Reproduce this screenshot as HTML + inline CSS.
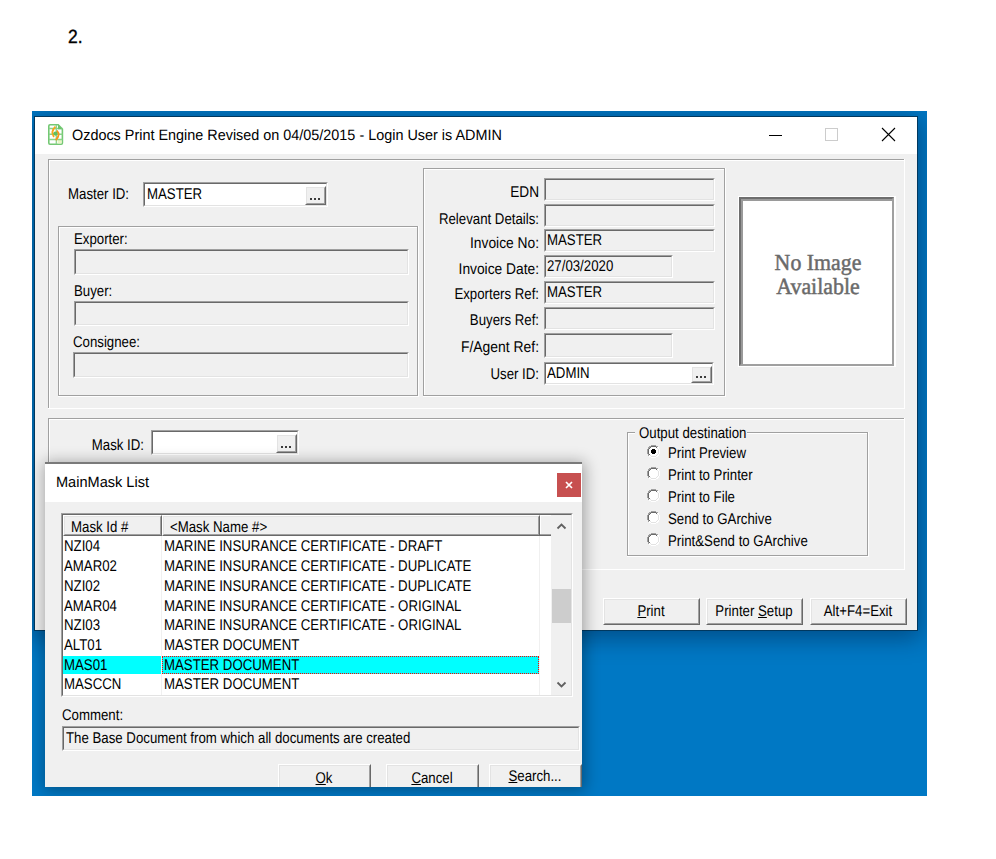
<!DOCTYPE html>
<html><head><meta charset="utf-8"><style>
html,body{margin:0;padding:0;background:#fff;width:996px;height:859px;overflow:hidden;position:relative}
div{position:absolute}
.t{white-space:pre;text-rendering:geometricPrecision}
</style></head><body>
<div class="t" style="left:68px;top:28px;font-size:19px;line-height:19px;color:#000;font-family:'Liberation Sans';transform:scaleX(0.92);transform-origin:left top;-webkit-text-stroke:0.35px #000;">2.</div>
<div style="left:32px;top:111px;width:895px;height:685px;background:#0078c4;overflow:hidden"><div style="left:3px;top:6px;width:882px;height:513px;box-shadow:0 5px 22px 3px rgba(0,20,50,0.42)"></div><div style="left:2px;top:5px;width:884px;height:515px;background:#00385f"></div></div>
<div style="left:35px;top:117px;width:882px;height:513px;background:#f0f0f0"></div>
<div style="left:35px;top:117px;width:882px;height:37px;background:#fff"></div>
<svg style="position:absolute;left:48px;top:124px" width="16" height="21" viewBox="0 0 16 21">
<path d="M2 0.8 H10.2 L14.4 5 V19 Q14.4 20.2 13.2 20.2 H2 Q0.8 20.2 0.8 19 V2 Q0.8 0.8 2 0.8 Z" fill="#fff" stroke="#74c874" stroke-width="1.6"/>
<rect x="9.6" y="15.6" width="4" height="3.8" fill="#e9f6c4"/>
<path d="M1 4.6 H14.4 M1 10.3 H14.4 M1 15.6 H14.4" stroke="#8ad48a" stroke-width="1.5"/>
<path d="M8.3 1 V20" stroke="#8ad48a" stroke-width="1.3"/>
<path d="M10 0.8 V5.2 H14.4 Z" fill="#6cc46c"/>
<path d="M7.4 2.6 Q2.4 7.4 5.9 12.9" fill="none" stroke="#f8a51c" stroke-width="1.8"/>
<path d="M8.9 6.6 Q12.8 11 7.7 16.2" fill="none" stroke="#f7941a" stroke-width="1.8"/>
<circle cx="7.4" cy="9.6" r="2.1" fill="#5fc05f"/>
</svg>
<div class="t" style="left:72px;top:128px;font-size:15px;line-height:15px;color:#000;font-family:'Liberation Sans';transform:scaleX(0.96);transform-origin:left top;">Ozdocs Print Engine Revised on 04/05/2015 - Login User is ADMIN</div>
<div style="left:769px;top:135px;width:13px;height:1px;background:#000"></div>
<div style="left:825px;top:128px;width:13px;height:13px;border:1px solid #cccccc;box-sizing:border-box"></div>
<svg style="position:absolute;left:881px;top:127px" width="15" height="15" viewBox="0 0 15 15"><path d="M1 1 L14 14 M14 1 L1 14" stroke="#000" stroke-width="1.1"/></svg>
<div style="left:48px;top:159px;width:856px;height:1px;background:#a0a0a0"></div>
<div style="left:48px;top:159px;width:1px;height:249px;background:#a0a0a0"></div>
<div style="left:49px;top:160px;width:855px;height:1px;background:#fff"></div>
<div style="left:49px;top:160px;width:1px;height:248px;background:#fff"></div>
<div style="left:48px;top:408px;width:857px;height:1px;background:#fff"></div>
<div style="left:904px;top:159px;width:1px;height:250px;background:#fff"></div>
<div class="t" style="left:68px;top:187px;font-size:15.5px;line-height:15.5px;color:#000;font-family:'Liberation Sans';transform:scaleX(0.854);transform-origin:left top;">Master ID:</div>
<div style="left:143px;top:182px;width:185px;height:25px;background:#fff;border-top:1px solid #a0a0a0;border-left:1px solid #a0a0a0;border-bottom:1px solid #fff;border-right:1px solid #fff;box-sizing:border-box"></div>
<div style="left:144px;top:183px;width:183px;height:23px;border-top:1px solid #696969;border-left:1px solid #696969;border-bottom:1px solid #e3e3e3;border-right:1px solid #e3e3e3;box-sizing:border-box"></div>
<div class="t" style="left:147px;top:187px;font-size:15.5px;line-height:15.5px;color:#000;font-family:'Liberation Sans';transform:scaleX(0.854);transform-origin:left top;">MASTER</div>
<div style="left:305px;top:186px;width:21px;height:19px;background:#f0f0f0;border-top:1px solid #fff;border-left:1px solid #fff;border-bottom:1px solid #696969;border-right:1px solid #696969;box-sizing:border-box"></div>
<div style="left:306px;top:187px;width:19px;height:17px;border-top:1px solid #e3e3e3;border-left:1px solid #e3e3e3;border-bottom:1px solid #a0a0a0;border-right:1px solid #a0a0a0;box-sizing:border-box"></div>
<div style="left:310px;top:198px;width:2px;height:2px;background:#000;border-radius:1px"></div>
<div style="left:314px;top:198px;width:2px;height:2px;background:#000;border-radius:1px"></div>
<div style="left:318px;top:198px;width:2px;height:2px;background:#000;border-radius:1px"></div>
<div style="left:58px;top:226px;width:360px;height:170px;border:1px solid #a0a0a0;box-sizing:border-box"></div>
<div style="left:59px;top:227px;width:358px;height:168px;border-top:1px solid #fff;border-left:1px solid #fff;box-sizing:border-box"></div>
<div style="left:58px;top:396px;width:361px;height:1px;background:#fff"></div>
<div style="left:418px;top:226px;width:1px;height:171px;background:#fff"></div>
<div class="t" style="left:74px;top:232px;font-size:15.5px;line-height:15.5px;color:#000;font-family:'Liberation Sans';transform:scaleX(0.854);transform-origin:left top;">Exporter:</div>
<div style="left:74px;top:249px;width:335px;height:26px;background:#f0f0f0;border-top:1px solid #a0a0a0;border-left:1px solid #a0a0a0;border-bottom:1px solid #fff;border-right:1px solid #fff;box-sizing:border-box"></div>
<div style="left:75px;top:250px;width:333px;height:24px;border-top:1px solid #696969;border-left:1px solid #696969;border-bottom:1px solid #e3e3e3;border-right:1px solid #e3e3e3;box-sizing:border-box"></div>
<div class="t" style="left:74px;top:284px;font-size:15.5px;line-height:15.5px;color:#000;font-family:'Liberation Sans';transform:scaleX(0.854);transform-origin:left top;">Buyer:</div>
<div style="left:74px;top:301px;width:335px;height:25px;background:#f0f0f0;border-top:1px solid #a0a0a0;border-left:1px solid #a0a0a0;border-bottom:1px solid #fff;border-right:1px solid #fff;box-sizing:border-box"></div>
<div style="left:75px;top:302px;width:333px;height:23px;border-top:1px solid #696969;border-left:1px solid #696969;border-bottom:1px solid #e3e3e3;border-right:1px solid #e3e3e3;box-sizing:border-box"></div>
<div class="t" style="left:73px;top:335px;font-size:15.5px;line-height:15.5px;color:#000;font-family:'Liberation Sans';transform:scaleX(0.854);transform-origin:left top;">Consignee:</div>
<div style="left:73px;top:352px;width:336px;height:26px;background:#f0f0f0;border-top:1px solid #a0a0a0;border-left:1px solid #a0a0a0;border-bottom:1px solid #fff;border-right:1px solid #fff;box-sizing:border-box"></div>
<div style="left:74px;top:353px;width:334px;height:24px;border-top:1px solid #696969;border-left:1px solid #696969;border-bottom:1px solid #e3e3e3;border-right:1px solid #e3e3e3;box-sizing:border-box"></div>
<div style="left:423px;top:168px;width:302px;height:228px;border:1px solid #a0a0a0;box-sizing:border-box"></div>
<div style="left:424px;top:169px;width:300px;height:226px;border-top:1px solid #fff;border-left:1px solid #fff;box-sizing:border-box"></div>
<div style="left:423px;top:396px;width:303px;height:1px;background:#fff"></div>
<div style="left:725px;top:168px;width:1px;height:229px;background:#fff"></div>
<div class="t" style="left:-61px;width:600px;text-align:right;top:185px;font-size:15.5px;line-height:15.5px;color:#000;font-family:'Liberation Sans';transform:scaleX(0.87962);transform-origin:right top;">EDN</div>
<div style="left:544px;top:178px;width:171px;height:23px;background:#f0f0f0;border-top:1px solid #a0a0a0;border-left:1px solid #a0a0a0;border-bottom:1px solid #fff;border-right:1px solid #fff;box-sizing:border-box"></div>
<div style="left:545px;top:179px;width:169px;height:21px;border-top:1px solid #696969;border-left:1px solid #696969;border-bottom:1px solid #e3e3e3;border-right:1px solid #e3e3e3;box-sizing:border-box"></div>
<div class="t" style="left:-61px;width:600px;text-align:right;top:212px;font-size:15.5px;line-height:15.5px;color:#000;font-family:'Liberation Sans';transform:scaleX(0.854);transform-origin:right top;">Relevant Details:</div>
<div style="left:544px;top:204px;width:171px;height:23px;background:#f0f0f0;border-top:1px solid #a0a0a0;border-left:1px solid #a0a0a0;border-bottom:1px solid #fff;border-right:1px solid #fff;box-sizing:border-box"></div>
<div style="left:545px;top:205px;width:169px;height:21px;border-top:1px solid #696969;border-left:1px solid #696969;border-bottom:1px solid #e3e3e3;border-right:1px solid #e3e3e3;box-sizing:border-box"></div>
<div class="t" style="left:-61px;width:600px;text-align:right;top:236px;font-size:15.5px;line-height:15.5px;color:#000;font-family:'Liberation Sans';transform:scaleX(0.889868);transform-origin:right top;">Invoice No:</div>
<div style="left:544px;top:229px;width:171px;height:23px;background:#f0f0f0;border-top:1px solid #a0a0a0;border-left:1px solid #a0a0a0;border-bottom:1px solid #fff;border-right:1px solid #fff;box-sizing:border-box"></div>
<div style="left:545px;top:230px;width:169px;height:21px;border-top:1px solid #696969;border-left:1px solid #696969;border-bottom:1px solid #e3e3e3;border-right:1px solid #e3e3e3;box-sizing:border-box"></div>
<div class="t" style="left:547px;top:233px;font-size:15.5px;line-height:15.5px;color:#000;font-family:'Liberation Sans';transform:scaleX(0.854);transform-origin:left top;">MASTER</div>
<div class="t" style="left:-61px;width:600px;text-align:right;top:262px;font-size:15.5px;line-height:15.5px;color:#000;font-family:'Liberation Sans';transform:scaleX(0.889014);transform-origin:right top;">Invoice Date:</div>
<div style="left:544px;top:255px;width:129px;height:23px;background:#f0f0f0;border-top:1px solid #a0a0a0;border-left:1px solid #a0a0a0;border-bottom:1px solid #fff;border-right:1px solid #fff;box-sizing:border-box"></div>
<div style="left:545px;top:256px;width:127px;height:21px;border-top:1px solid #696969;border-left:1px solid #696969;border-bottom:1px solid #e3e3e3;border-right:1px solid #e3e3e3;box-sizing:border-box"></div>
<div class="t" style="left:547px;top:259px;font-size:15.5px;line-height:15.5px;color:#000;font-family:'Liberation Sans';transform:scaleX(0.854);transform-origin:left top;">27/03/2020</div>
<div class="t" style="left:-61px;width:600px;text-align:right;top:287px;font-size:15.5px;line-height:15.5px;color:#000;font-family:'Liberation Sans';transform:scaleX(0.854);transform-origin:right top;">Exporters Ref:</div>
<div style="left:544px;top:281px;width:171px;height:23px;background:#f0f0f0;border-top:1px solid #a0a0a0;border-left:1px solid #a0a0a0;border-bottom:1px solid #fff;border-right:1px solid #fff;box-sizing:border-box"></div>
<div style="left:545px;top:282px;width:169px;height:21px;border-top:1px solid #696969;border-left:1px solid #696969;border-bottom:1px solid #e3e3e3;border-right:1px solid #e3e3e3;box-sizing:border-box"></div>
<div class="t" style="left:547px;top:285px;font-size:15.5px;line-height:15.5px;color:#000;font-family:'Liberation Sans';transform:scaleX(0.854);transform-origin:left top;">MASTER</div>
<div class="t" style="left:-61px;width:600px;text-align:right;top:313px;font-size:15.5px;line-height:15.5px;color:#000;font-family:'Liberation Sans';transform:scaleX(0.854);transform-origin:right top;">Buyers Ref:</div>
<div style="left:544px;top:307px;width:171px;height:23px;background:#f0f0f0;border-top:1px solid #a0a0a0;border-left:1px solid #a0a0a0;border-bottom:1px solid #fff;border-right:1px solid #fff;box-sizing:border-box"></div>
<div style="left:545px;top:308px;width:169px;height:21px;border-top:1px solid #696969;border-left:1px solid #696969;border-bottom:1px solid #e3e3e3;border-right:1px solid #e3e3e3;box-sizing:border-box"></div>
<div class="t" style="left:-61px;width:600px;text-align:right;top:340px;font-size:15.5px;line-height:15.5px;color:#000;font-family:'Liberation Sans';transform:scaleX(0.8967);transform-origin:right top;">F/Agent Ref:</div>
<div style="left:544px;top:333px;width:129px;height:25px;background:#f0f0f0;border-top:1px solid #a0a0a0;border-left:1px solid #a0a0a0;border-bottom:1px solid #fff;border-right:1px solid #fff;box-sizing:border-box"></div>
<div style="left:545px;top:334px;width:127px;height:23px;border-top:1px solid #696969;border-left:1px solid #696969;border-bottom:1px solid #e3e3e3;border-right:1px solid #e3e3e3;box-sizing:border-box"></div>
<div class="t" style="left:-61px;width:600px;text-align:right;top:367px;font-size:15.5px;line-height:15.5px;color:#000;font-family:'Liberation Sans';transform:scaleX(0.854);transform-origin:right top;">User ID:</div>
<div style="left:544px;top:362px;width:170px;height:23px;background:#fff;border-top:1px solid #a0a0a0;border-left:1px solid #a0a0a0;border-bottom:1px solid #fff;border-right:1px solid #fff;box-sizing:border-box"></div>
<div style="left:545px;top:363px;width:168px;height:21px;border-top:1px solid #696969;border-left:1px solid #696969;border-bottom:1px solid #e3e3e3;border-right:1px solid #e3e3e3;box-sizing:border-box"></div>
<div class="t" style="left:547px;top:366px;font-size:15.5px;line-height:15.5px;color:#000;font-family:'Liberation Sans';transform:scaleX(0.854);transform-origin:left top;">ADMIN</div>
<div style="left:691px;top:366px;width:21px;height:17px;background:#f0f0f0;border-top:1px solid #fff;border-left:1px solid #fff;border-bottom:1px solid #696969;border-right:1px solid #696969;box-sizing:border-box"></div>
<div style="left:692px;top:367px;width:19px;height:15px;border-top:1px solid #e3e3e3;border-left:1px solid #e3e3e3;border-bottom:1px solid #a0a0a0;border-right:1px solid #a0a0a0;box-sizing:border-box"></div>
<div style="left:696px;top:376px;width:2px;height:2px;background:#000;border-radius:1px"></div>
<div style="left:700px;top:376px;width:2px;height:2px;background:#000;border-radius:1px"></div>
<div style="left:704px;top:376px;width:2px;height:2px;background:#000;border-radius:1px"></div>
<div style="left:738px;top:196px;width:158px;height:171px;background:#fff"></div>
<div style="left:739px;top:197px;width:155px;height:169px;background:#fff;border-top:2px solid #6e6e6e;border-left:2px solid #6e6e6e;border-bottom:2px solid #a0a0a0;border-right:2px solid #a0a0a0;box-sizing:border-box"></div>
<div style="left:741px;top:199px;width:151px;height:165px;border-top:2px solid #9a9a9a;border-left:2px solid #9a9a9a;box-sizing:border-box"></div>
<div class="t" style="left:518px;width:600px;text-align:center;top:251px;font-size:23px;line-height:23px;color:#6a6a6a;font-family:'Liberation Serif';transform:scaleX(0.95);transform-origin:center top;font-weight:normal;-webkit-text-stroke:0.5px #6a6a6a;">No Image</div>
<div class="t" style="left:518px;width:600px;text-align:center;top:275px;font-size:23px;line-height:23px;color:#6a6a6a;font-family:'Liberation Serif';transform:scaleX(0.95);transform-origin:center top;font-weight:normal;-webkit-text-stroke:0.5px #6a6a6a;">Available</div>
<div style="left:48px;top:418px;width:856px;height:1px;background:#a0a0a0"></div>
<div style="left:48px;top:418px;width:1px;height:151px;background:#a0a0a0"></div>
<div style="left:49px;top:419px;width:855px;height:1px;background:#fff"></div>
<div style="left:49px;top:419px;width:1px;height:150px;background:#fff"></div>
<div style="left:48px;top:569px;width:857px;height:1px;background:#fff"></div>
<div style="left:904px;top:418px;width:1px;height:152px;background:#fff"></div>
<div class="t" style="left:-456px;width:600px;text-align:right;top:438px;font-size:15.5px;line-height:15.5px;color:#000;font-family:'Liberation Sans';transform:scaleX(0.854);transform-origin:right top;">Mask ID:</div>
<div style="left:151px;top:430px;width:148px;height:25px;background:#fff;border-top:1px solid #a0a0a0;border-left:1px solid #a0a0a0;border-bottom:1px solid #fff;border-right:1px solid #fff;box-sizing:border-box"></div>
<div style="left:152px;top:431px;width:146px;height:23px;border-top:1px solid #696969;border-left:1px solid #696969;border-bottom:1px solid #e3e3e3;border-right:1px solid #e3e3e3;box-sizing:border-box"></div>
<div style="left:276px;top:434px;width:21px;height:19px;background:#f0f0f0;border-top:1px solid #fff;border-left:1px solid #fff;border-bottom:1px solid #696969;border-right:1px solid #696969;box-sizing:border-box"></div>
<div style="left:277px;top:435px;width:19px;height:17px;border-top:1px solid #e3e3e3;border-left:1px solid #e3e3e3;border-bottom:1px solid #a0a0a0;border-right:1px solid #a0a0a0;box-sizing:border-box"></div>
<div style="left:281px;top:446px;width:2px;height:2px;background:#000;border-radius:1px"></div>
<div style="left:285px;top:446px;width:2px;height:2px;background:#000;border-radius:1px"></div>
<div style="left:289px;top:446px;width:2px;height:2px;background:#000;border-radius:1px"></div>
<div style="left:627px;top:432px;width:241px;height:124px;border:1px solid #a0a0a0;box-sizing:border-box"></div>
<div style="left:628px;top:433px;width:239px;height:122px;border-top:1px solid #fff;border-left:1px solid #fff;box-sizing:border-box"></div>
<div style="left:627px;top:556px;width:242px;height:1px;background:#fff"></div>
<div style="left:868px;top:432px;width:1px;height:125px;background:#fff"></div>
<div style="left:635px;top:426px;width:112px;height:12px;background:#f0f0f0"></div>
<div class="t" style="left:639px;top:426px;font-size:15.5px;line-height:15.5px;color:#000;font-family:'Liberation Sans';transform:scaleX(0.854);transform-origin:left top;">Output destination</div>
<svg style="position:absolute;left:647px;top:445px" width="13" height="13" shape-rendering="crispEdges"><rect x="4" y="0" width="1" height="1" fill="#a0a0a0"/><rect x="5" y="0" width="1" height="1" fill="#a0a0a0"/><rect x="6" y="0" width="1" height="1" fill="#a0a0a0"/><rect x="7" y="0" width="1" height="1" fill="#a0a0a0"/><rect x="8" y="0" width="1" height="1" fill="#a0a0a0"/><rect x="2" y="1" width="1" height="1" fill="#a0a0a0"/><rect x="3" y="1" width="1" height="1" fill="#a0a0a0"/><rect x="4" y="1" width="1" height="1" fill="#696969"/><rect x="5" y="1" width="1" height="1" fill="#696969"/><rect x="6" y="1" width="1" height="1" fill="#696969"/><rect x="7" y="1" width="1" height="1" fill="#696969"/><rect x="8" y="1" width="1" height="1" fill="#696969"/><rect x="9" y="1" width="1" height="1" fill="#a0a0a0"/><rect x="10" y="1" width="1" height="1" fill="#a0a0a0"/><rect x="1" y="2" width="1" height="1" fill="#a0a0a0"/><rect x="2" y="2" width="1" height="1" fill="#a0a0a0"/><rect x="3" y="2" width="1" height="1" fill="#696969"/><rect x="4" y="2" width="1" height="1" fill="#ffffff"/><rect x="5" y="2" width="1" height="1" fill="#ffffff"/><rect x="6" y="2" width="1" height="1" fill="#ffffff"/><rect x="7" y="2" width="1" height="1" fill="#ffffff"/><rect x="8" y="2" width="1" height="1" fill="#ffffff"/><rect x="9" y="2" width="1" height="1" fill="#696969"/><rect x="10" y="2" width="1" height="1" fill="#ffffff"/><rect x="11" y="2" width="1" height="1" fill="#ffffff"/><rect x="1" y="3" width="1" height="1" fill="#a0a0a0"/><rect x="2" y="3" width="1" height="1" fill="#696969"/><rect x="3" y="3" width="1" height="1" fill="#ffffff"/><rect x="4" y="3" width="1" height="1" fill="#ffffff"/><rect x="5" y="3" width="1" height="1" fill="#ffffff"/><rect x="6" y="3" width="1" height="1" fill="#ffffff"/><rect x="7" y="3" width="1" height="1" fill="#ffffff"/><rect x="8" y="3" width="1" height="1" fill="#ffffff"/><rect x="9" y="3" width="1" height="1" fill="#ffffff"/><rect x="10" y="3" width="1" height="1" fill="#e3e3e3"/><rect x="11" y="3" width="1" height="1" fill="#ffffff"/><rect x="0" y="4" width="1" height="1" fill="#a0a0a0"/><rect x="1" y="4" width="1" height="1" fill="#696969"/><rect x="2" y="4" width="1" height="1" fill="#ffffff"/><rect x="3" y="4" width="1" height="1" fill="#ffffff"/><rect x="4" y="4" width="1" height="1" fill="#ffffff"/><rect x="5" y="4" width="1" height="1" fill="#000000"/><rect x="6" y="4" width="1" height="1" fill="#000000"/><rect x="7" y="4" width="1" height="1" fill="#000000"/><rect x="8" y="4" width="1" height="1" fill="#ffffff"/><rect x="9" y="4" width="1" height="1" fill="#ffffff"/><rect x="10" y="4" width="1" height="1" fill="#ffffff"/><rect x="11" y="4" width="1" height="1" fill="#e3e3e3"/><rect x="12" y="4" width="1" height="1" fill="#ffffff"/><rect x="0" y="5" width="1" height="1" fill="#a0a0a0"/><rect x="1" y="5" width="1" height="1" fill="#696969"/><rect x="2" y="5" width="1" height="1" fill="#ffffff"/><rect x="3" y="5" width="1" height="1" fill="#ffffff"/><rect x="4" y="5" width="1" height="1" fill="#000000"/><rect x="5" y="5" width="1" height="1" fill="#000000"/><rect x="6" y="5" width="1" height="1" fill="#000000"/><rect x="7" y="5" width="1" height="1" fill="#000000"/><rect x="8" y="5" width="1" height="1" fill="#000000"/><rect x="9" y="5" width="1" height="1" fill="#ffffff"/><rect x="10" y="5" width="1" height="1" fill="#ffffff"/><rect x="11" y="5" width="1" height="1" fill="#e3e3e3"/><rect x="12" y="5" width="1" height="1" fill="#ffffff"/><rect x="0" y="6" width="1" height="1" fill="#a0a0a0"/><rect x="1" y="6" width="1" height="1" fill="#696969"/><rect x="2" y="6" width="1" height="1" fill="#ffffff"/><rect x="3" y="6" width="1" height="1" fill="#ffffff"/><rect x="4" y="6" width="1" height="1" fill="#000000"/><rect x="5" y="6" width="1" height="1" fill="#000000"/><rect x="6" y="6" width="1" height="1" fill="#000000"/><rect x="7" y="6" width="1" height="1" fill="#000000"/><rect x="8" y="6" width="1" height="1" fill="#000000"/><rect x="9" y="6" width="1" height="1" fill="#ffffff"/><rect x="10" y="6" width="1" height="1" fill="#ffffff"/><rect x="11" y="6" width="1" height="1" fill="#e3e3e3"/><rect x="12" y="6" width="1" height="1" fill="#ffffff"/><rect x="0" y="7" width="1" height="1" fill="#a0a0a0"/><rect x="1" y="7" width="1" height="1" fill="#696969"/><rect x="2" y="7" width="1" height="1" fill="#ffffff"/><rect x="3" y="7" width="1" height="1" fill="#ffffff"/><rect x="4" y="7" width="1" height="1" fill="#000000"/><rect x="5" y="7" width="1" height="1" fill="#000000"/><rect x="6" y="7" width="1" height="1" fill="#000000"/><rect x="7" y="7" width="1" height="1" fill="#000000"/><rect x="8" y="7" width="1" height="1" fill="#000000"/><rect x="9" y="7" width="1" height="1" fill="#ffffff"/><rect x="10" y="7" width="1" height="1" fill="#ffffff"/><rect x="11" y="7" width="1" height="1" fill="#e3e3e3"/><rect x="12" y="7" width="1" height="1" fill="#ffffff"/><rect x="0" y="8" width="1" height="1" fill="#a0a0a0"/><rect x="1" y="8" width="1" height="1" fill="#696969"/><rect x="2" y="8" width="1" height="1" fill="#ffffff"/><rect x="3" y="8" width="1" height="1" fill="#ffffff"/><rect x="4" y="8" width="1" height="1" fill="#ffffff"/><rect x="5" y="8" width="1" height="1" fill="#000000"/><rect x="6" y="8" width="1" height="1" fill="#000000"/><rect x="7" y="8" width="1" height="1" fill="#000000"/><rect x="8" y="8" width="1" height="1" fill="#ffffff"/><rect x="9" y="8" width="1" height="1" fill="#ffffff"/><rect x="10" y="8" width="1" height="1" fill="#ffffff"/><rect x="11" y="8" width="1" height="1" fill="#e3e3e3"/><rect x="12" y="8" width="1" height="1" fill="#ffffff"/><rect x="1" y="9" width="1" height="1" fill="#a0a0a0"/><rect x="2" y="9" width="1" height="1" fill="#696969"/><rect x="3" y="9" width="1" height="1" fill="#ffffff"/><rect x="4" y="9" width="1" height="1" fill="#ffffff"/><rect x="5" y="9" width="1" height="1" fill="#ffffff"/><rect x="6" y="9" width="1" height="1" fill="#ffffff"/><rect x="7" y="9" width="1" height="1" fill="#ffffff"/><rect x="8" y="9" width="1" height="1" fill="#ffffff"/><rect x="9" y="9" width="1" height="1" fill="#ffffff"/><rect x="10" y="9" width="1" height="1" fill="#e3e3e3"/><rect x="11" y="9" width="1" height="1" fill="#ffffff"/><rect x="1" y="10" width="1" height="1" fill="#a0a0a0"/><rect x="2" y="10" width="1" height="1" fill="#ffffff"/><rect x="3" y="10" width="1" height="1" fill="#e3e3e3"/><rect x="4" y="10" width="1" height="1" fill="#ffffff"/><rect x="5" y="10" width="1" height="1" fill="#ffffff"/><rect x="6" y="10" width="1" height="1" fill="#ffffff"/><rect x="7" y="10" width="1" height="1" fill="#ffffff"/><rect x="8" y="10" width="1" height="1" fill="#ffffff"/><rect x="9" y="10" width="1" height="1" fill="#e3e3e3"/><rect x="10" y="10" width="1" height="1" fill="#ffffff"/><rect x="11" y="10" width="1" height="1" fill="#ffffff"/><rect x="2" y="11" width="1" height="1" fill="#ffffff"/><rect x="3" y="11" width="1" height="1" fill="#ffffff"/><rect x="4" y="11" width="1" height="1" fill="#e3e3e3"/><rect x="5" y="11" width="1" height="1" fill="#e3e3e3"/><rect x="6" y="11" width="1" height="1" fill="#e3e3e3"/><rect x="7" y="11" width="1" height="1" fill="#e3e3e3"/><rect x="8" y="11" width="1" height="1" fill="#e3e3e3"/><rect x="9" y="11" width="1" height="1" fill="#ffffff"/><rect x="10" y="11" width="1" height="1" fill="#ffffff"/><rect x="4" y="12" width="1" height="1" fill="#ffffff"/><rect x="5" y="12" width="1" height="1" fill="#ffffff"/><rect x="6" y="12" width="1" height="1" fill="#ffffff"/><rect x="7" y="12" width="1" height="1" fill="#ffffff"/><rect x="8" y="12" width="1" height="1" fill="#ffffff"/></svg>
<div class="t" style="left:668px;top:446px;font-size:15.5px;line-height:15.5px;color:#000;font-family:'Liberation Sans';transform:scaleX(0.854);transform-origin:left top;">Print Preview</div>
<svg style="position:absolute;left:647px;top:467px" width="13" height="13" shape-rendering="crispEdges"><rect x="4" y="0" width="1" height="1" fill="#a0a0a0"/><rect x="5" y="0" width="1" height="1" fill="#a0a0a0"/><rect x="6" y="0" width="1" height="1" fill="#a0a0a0"/><rect x="7" y="0" width="1" height="1" fill="#a0a0a0"/><rect x="8" y="0" width="1" height="1" fill="#a0a0a0"/><rect x="2" y="1" width="1" height="1" fill="#a0a0a0"/><rect x="3" y="1" width="1" height="1" fill="#a0a0a0"/><rect x="4" y="1" width="1" height="1" fill="#696969"/><rect x="5" y="1" width="1" height="1" fill="#696969"/><rect x="6" y="1" width="1" height="1" fill="#696969"/><rect x="7" y="1" width="1" height="1" fill="#696969"/><rect x="8" y="1" width="1" height="1" fill="#696969"/><rect x="9" y="1" width="1" height="1" fill="#a0a0a0"/><rect x="10" y="1" width="1" height="1" fill="#a0a0a0"/><rect x="1" y="2" width="1" height="1" fill="#a0a0a0"/><rect x="2" y="2" width="1" height="1" fill="#a0a0a0"/><rect x="3" y="2" width="1" height="1" fill="#696969"/><rect x="4" y="2" width="1" height="1" fill="#ffffff"/><rect x="5" y="2" width="1" height="1" fill="#ffffff"/><rect x="6" y="2" width="1" height="1" fill="#ffffff"/><rect x="7" y="2" width="1" height="1" fill="#ffffff"/><rect x="8" y="2" width="1" height="1" fill="#ffffff"/><rect x="9" y="2" width="1" height="1" fill="#696969"/><rect x="10" y="2" width="1" height="1" fill="#ffffff"/><rect x="11" y="2" width="1" height="1" fill="#ffffff"/><rect x="1" y="3" width="1" height="1" fill="#a0a0a0"/><rect x="2" y="3" width="1" height="1" fill="#696969"/><rect x="3" y="3" width="1" height="1" fill="#ffffff"/><rect x="4" y="3" width="1" height="1" fill="#ffffff"/><rect x="5" y="3" width="1" height="1" fill="#ffffff"/><rect x="6" y="3" width="1" height="1" fill="#ffffff"/><rect x="7" y="3" width="1" height="1" fill="#ffffff"/><rect x="8" y="3" width="1" height="1" fill="#ffffff"/><rect x="9" y="3" width="1" height="1" fill="#ffffff"/><rect x="10" y="3" width="1" height="1" fill="#e3e3e3"/><rect x="11" y="3" width="1" height="1" fill="#ffffff"/><rect x="0" y="4" width="1" height="1" fill="#a0a0a0"/><rect x="1" y="4" width="1" height="1" fill="#696969"/><rect x="2" y="4" width="1" height="1" fill="#ffffff"/><rect x="3" y="4" width="1" height="1" fill="#ffffff"/><rect x="4" y="4" width="1" height="1" fill="#ffffff"/><rect x="5" y="4" width="1" height="1" fill="#ffffff"/><rect x="6" y="4" width="1" height="1" fill="#ffffff"/><rect x="7" y="4" width="1" height="1" fill="#ffffff"/><rect x="8" y="4" width="1" height="1" fill="#ffffff"/><rect x="9" y="4" width="1" height="1" fill="#ffffff"/><rect x="10" y="4" width="1" height="1" fill="#ffffff"/><rect x="11" y="4" width="1" height="1" fill="#e3e3e3"/><rect x="12" y="4" width="1" height="1" fill="#ffffff"/><rect x="0" y="5" width="1" height="1" fill="#a0a0a0"/><rect x="1" y="5" width="1" height="1" fill="#696969"/><rect x="2" y="5" width="1" height="1" fill="#ffffff"/><rect x="3" y="5" width="1" height="1" fill="#ffffff"/><rect x="4" y="5" width="1" height="1" fill="#ffffff"/><rect x="5" y="5" width="1" height="1" fill="#ffffff"/><rect x="6" y="5" width="1" height="1" fill="#ffffff"/><rect x="7" y="5" width="1" height="1" fill="#ffffff"/><rect x="8" y="5" width="1" height="1" fill="#ffffff"/><rect x="9" y="5" width="1" height="1" fill="#ffffff"/><rect x="10" y="5" width="1" height="1" fill="#ffffff"/><rect x="11" y="5" width="1" height="1" fill="#e3e3e3"/><rect x="12" y="5" width="1" height="1" fill="#ffffff"/><rect x="0" y="6" width="1" height="1" fill="#a0a0a0"/><rect x="1" y="6" width="1" height="1" fill="#696969"/><rect x="2" y="6" width="1" height="1" fill="#ffffff"/><rect x="3" y="6" width="1" height="1" fill="#ffffff"/><rect x="4" y="6" width="1" height="1" fill="#ffffff"/><rect x="5" y="6" width="1" height="1" fill="#ffffff"/><rect x="6" y="6" width="1" height="1" fill="#ffffff"/><rect x="7" y="6" width="1" height="1" fill="#ffffff"/><rect x="8" y="6" width="1" height="1" fill="#ffffff"/><rect x="9" y="6" width="1" height="1" fill="#ffffff"/><rect x="10" y="6" width="1" height="1" fill="#ffffff"/><rect x="11" y="6" width="1" height="1" fill="#e3e3e3"/><rect x="12" y="6" width="1" height="1" fill="#ffffff"/><rect x="0" y="7" width="1" height="1" fill="#a0a0a0"/><rect x="1" y="7" width="1" height="1" fill="#696969"/><rect x="2" y="7" width="1" height="1" fill="#ffffff"/><rect x="3" y="7" width="1" height="1" fill="#ffffff"/><rect x="4" y="7" width="1" height="1" fill="#ffffff"/><rect x="5" y="7" width="1" height="1" fill="#ffffff"/><rect x="6" y="7" width="1" height="1" fill="#ffffff"/><rect x="7" y="7" width="1" height="1" fill="#ffffff"/><rect x="8" y="7" width="1" height="1" fill="#ffffff"/><rect x="9" y="7" width="1" height="1" fill="#ffffff"/><rect x="10" y="7" width="1" height="1" fill="#ffffff"/><rect x="11" y="7" width="1" height="1" fill="#e3e3e3"/><rect x="12" y="7" width="1" height="1" fill="#ffffff"/><rect x="0" y="8" width="1" height="1" fill="#a0a0a0"/><rect x="1" y="8" width="1" height="1" fill="#696969"/><rect x="2" y="8" width="1" height="1" fill="#ffffff"/><rect x="3" y="8" width="1" height="1" fill="#ffffff"/><rect x="4" y="8" width="1" height="1" fill="#ffffff"/><rect x="5" y="8" width="1" height="1" fill="#ffffff"/><rect x="6" y="8" width="1" height="1" fill="#ffffff"/><rect x="7" y="8" width="1" height="1" fill="#ffffff"/><rect x="8" y="8" width="1" height="1" fill="#ffffff"/><rect x="9" y="8" width="1" height="1" fill="#ffffff"/><rect x="10" y="8" width="1" height="1" fill="#ffffff"/><rect x="11" y="8" width="1" height="1" fill="#e3e3e3"/><rect x="12" y="8" width="1" height="1" fill="#ffffff"/><rect x="1" y="9" width="1" height="1" fill="#a0a0a0"/><rect x="2" y="9" width="1" height="1" fill="#696969"/><rect x="3" y="9" width="1" height="1" fill="#ffffff"/><rect x="4" y="9" width="1" height="1" fill="#ffffff"/><rect x="5" y="9" width="1" height="1" fill="#ffffff"/><rect x="6" y="9" width="1" height="1" fill="#ffffff"/><rect x="7" y="9" width="1" height="1" fill="#ffffff"/><rect x="8" y="9" width="1" height="1" fill="#ffffff"/><rect x="9" y="9" width="1" height="1" fill="#ffffff"/><rect x="10" y="9" width="1" height="1" fill="#e3e3e3"/><rect x="11" y="9" width="1" height="1" fill="#ffffff"/><rect x="1" y="10" width="1" height="1" fill="#a0a0a0"/><rect x="2" y="10" width="1" height="1" fill="#ffffff"/><rect x="3" y="10" width="1" height="1" fill="#e3e3e3"/><rect x="4" y="10" width="1" height="1" fill="#ffffff"/><rect x="5" y="10" width="1" height="1" fill="#ffffff"/><rect x="6" y="10" width="1" height="1" fill="#ffffff"/><rect x="7" y="10" width="1" height="1" fill="#ffffff"/><rect x="8" y="10" width="1" height="1" fill="#ffffff"/><rect x="9" y="10" width="1" height="1" fill="#e3e3e3"/><rect x="10" y="10" width="1" height="1" fill="#ffffff"/><rect x="11" y="10" width="1" height="1" fill="#ffffff"/><rect x="2" y="11" width="1" height="1" fill="#ffffff"/><rect x="3" y="11" width="1" height="1" fill="#ffffff"/><rect x="4" y="11" width="1" height="1" fill="#e3e3e3"/><rect x="5" y="11" width="1" height="1" fill="#e3e3e3"/><rect x="6" y="11" width="1" height="1" fill="#e3e3e3"/><rect x="7" y="11" width="1" height="1" fill="#e3e3e3"/><rect x="8" y="11" width="1" height="1" fill="#e3e3e3"/><rect x="9" y="11" width="1" height="1" fill="#ffffff"/><rect x="10" y="11" width="1" height="1" fill="#ffffff"/><rect x="4" y="12" width="1" height="1" fill="#ffffff"/><rect x="5" y="12" width="1" height="1" fill="#ffffff"/><rect x="6" y="12" width="1" height="1" fill="#ffffff"/><rect x="7" y="12" width="1" height="1" fill="#ffffff"/><rect x="8" y="12" width="1" height="1" fill="#ffffff"/></svg>
<div class="t" style="left:668px;top:468px;font-size:15.5px;line-height:15.5px;color:#000;font-family:'Liberation Sans';transform:scaleX(0.854);transform-origin:left top;">Print to Printer</div>
<svg style="position:absolute;left:647px;top:489px" width="13" height="13" shape-rendering="crispEdges"><rect x="4" y="0" width="1" height="1" fill="#a0a0a0"/><rect x="5" y="0" width="1" height="1" fill="#a0a0a0"/><rect x="6" y="0" width="1" height="1" fill="#a0a0a0"/><rect x="7" y="0" width="1" height="1" fill="#a0a0a0"/><rect x="8" y="0" width="1" height="1" fill="#a0a0a0"/><rect x="2" y="1" width="1" height="1" fill="#a0a0a0"/><rect x="3" y="1" width="1" height="1" fill="#a0a0a0"/><rect x="4" y="1" width="1" height="1" fill="#696969"/><rect x="5" y="1" width="1" height="1" fill="#696969"/><rect x="6" y="1" width="1" height="1" fill="#696969"/><rect x="7" y="1" width="1" height="1" fill="#696969"/><rect x="8" y="1" width="1" height="1" fill="#696969"/><rect x="9" y="1" width="1" height="1" fill="#a0a0a0"/><rect x="10" y="1" width="1" height="1" fill="#a0a0a0"/><rect x="1" y="2" width="1" height="1" fill="#a0a0a0"/><rect x="2" y="2" width="1" height="1" fill="#a0a0a0"/><rect x="3" y="2" width="1" height="1" fill="#696969"/><rect x="4" y="2" width="1" height="1" fill="#ffffff"/><rect x="5" y="2" width="1" height="1" fill="#ffffff"/><rect x="6" y="2" width="1" height="1" fill="#ffffff"/><rect x="7" y="2" width="1" height="1" fill="#ffffff"/><rect x="8" y="2" width="1" height="1" fill="#ffffff"/><rect x="9" y="2" width="1" height="1" fill="#696969"/><rect x="10" y="2" width="1" height="1" fill="#ffffff"/><rect x="11" y="2" width="1" height="1" fill="#ffffff"/><rect x="1" y="3" width="1" height="1" fill="#a0a0a0"/><rect x="2" y="3" width="1" height="1" fill="#696969"/><rect x="3" y="3" width="1" height="1" fill="#ffffff"/><rect x="4" y="3" width="1" height="1" fill="#ffffff"/><rect x="5" y="3" width="1" height="1" fill="#ffffff"/><rect x="6" y="3" width="1" height="1" fill="#ffffff"/><rect x="7" y="3" width="1" height="1" fill="#ffffff"/><rect x="8" y="3" width="1" height="1" fill="#ffffff"/><rect x="9" y="3" width="1" height="1" fill="#ffffff"/><rect x="10" y="3" width="1" height="1" fill="#e3e3e3"/><rect x="11" y="3" width="1" height="1" fill="#ffffff"/><rect x="0" y="4" width="1" height="1" fill="#a0a0a0"/><rect x="1" y="4" width="1" height="1" fill="#696969"/><rect x="2" y="4" width="1" height="1" fill="#ffffff"/><rect x="3" y="4" width="1" height="1" fill="#ffffff"/><rect x="4" y="4" width="1" height="1" fill="#ffffff"/><rect x="5" y="4" width="1" height="1" fill="#ffffff"/><rect x="6" y="4" width="1" height="1" fill="#ffffff"/><rect x="7" y="4" width="1" height="1" fill="#ffffff"/><rect x="8" y="4" width="1" height="1" fill="#ffffff"/><rect x="9" y="4" width="1" height="1" fill="#ffffff"/><rect x="10" y="4" width="1" height="1" fill="#ffffff"/><rect x="11" y="4" width="1" height="1" fill="#e3e3e3"/><rect x="12" y="4" width="1" height="1" fill="#ffffff"/><rect x="0" y="5" width="1" height="1" fill="#a0a0a0"/><rect x="1" y="5" width="1" height="1" fill="#696969"/><rect x="2" y="5" width="1" height="1" fill="#ffffff"/><rect x="3" y="5" width="1" height="1" fill="#ffffff"/><rect x="4" y="5" width="1" height="1" fill="#ffffff"/><rect x="5" y="5" width="1" height="1" fill="#ffffff"/><rect x="6" y="5" width="1" height="1" fill="#ffffff"/><rect x="7" y="5" width="1" height="1" fill="#ffffff"/><rect x="8" y="5" width="1" height="1" fill="#ffffff"/><rect x="9" y="5" width="1" height="1" fill="#ffffff"/><rect x="10" y="5" width="1" height="1" fill="#ffffff"/><rect x="11" y="5" width="1" height="1" fill="#e3e3e3"/><rect x="12" y="5" width="1" height="1" fill="#ffffff"/><rect x="0" y="6" width="1" height="1" fill="#a0a0a0"/><rect x="1" y="6" width="1" height="1" fill="#696969"/><rect x="2" y="6" width="1" height="1" fill="#ffffff"/><rect x="3" y="6" width="1" height="1" fill="#ffffff"/><rect x="4" y="6" width="1" height="1" fill="#ffffff"/><rect x="5" y="6" width="1" height="1" fill="#ffffff"/><rect x="6" y="6" width="1" height="1" fill="#ffffff"/><rect x="7" y="6" width="1" height="1" fill="#ffffff"/><rect x="8" y="6" width="1" height="1" fill="#ffffff"/><rect x="9" y="6" width="1" height="1" fill="#ffffff"/><rect x="10" y="6" width="1" height="1" fill="#ffffff"/><rect x="11" y="6" width="1" height="1" fill="#e3e3e3"/><rect x="12" y="6" width="1" height="1" fill="#ffffff"/><rect x="0" y="7" width="1" height="1" fill="#a0a0a0"/><rect x="1" y="7" width="1" height="1" fill="#696969"/><rect x="2" y="7" width="1" height="1" fill="#ffffff"/><rect x="3" y="7" width="1" height="1" fill="#ffffff"/><rect x="4" y="7" width="1" height="1" fill="#ffffff"/><rect x="5" y="7" width="1" height="1" fill="#ffffff"/><rect x="6" y="7" width="1" height="1" fill="#ffffff"/><rect x="7" y="7" width="1" height="1" fill="#ffffff"/><rect x="8" y="7" width="1" height="1" fill="#ffffff"/><rect x="9" y="7" width="1" height="1" fill="#ffffff"/><rect x="10" y="7" width="1" height="1" fill="#ffffff"/><rect x="11" y="7" width="1" height="1" fill="#e3e3e3"/><rect x="12" y="7" width="1" height="1" fill="#ffffff"/><rect x="0" y="8" width="1" height="1" fill="#a0a0a0"/><rect x="1" y="8" width="1" height="1" fill="#696969"/><rect x="2" y="8" width="1" height="1" fill="#ffffff"/><rect x="3" y="8" width="1" height="1" fill="#ffffff"/><rect x="4" y="8" width="1" height="1" fill="#ffffff"/><rect x="5" y="8" width="1" height="1" fill="#ffffff"/><rect x="6" y="8" width="1" height="1" fill="#ffffff"/><rect x="7" y="8" width="1" height="1" fill="#ffffff"/><rect x="8" y="8" width="1" height="1" fill="#ffffff"/><rect x="9" y="8" width="1" height="1" fill="#ffffff"/><rect x="10" y="8" width="1" height="1" fill="#ffffff"/><rect x="11" y="8" width="1" height="1" fill="#e3e3e3"/><rect x="12" y="8" width="1" height="1" fill="#ffffff"/><rect x="1" y="9" width="1" height="1" fill="#a0a0a0"/><rect x="2" y="9" width="1" height="1" fill="#696969"/><rect x="3" y="9" width="1" height="1" fill="#ffffff"/><rect x="4" y="9" width="1" height="1" fill="#ffffff"/><rect x="5" y="9" width="1" height="1" fill="#ffffff"/><rect x="6" y="9" width="1" height="1" fill="#ffffff"/><rect x="7" y="9" width="1" height="1" fill="#ffffff"/><rect x="8" y="9" width="1" height="1" fill="#ffffff"/><rect x="9" y="9" width="1" height="1" fill="#ffffff"/><rect x="10" y="9" width="1" height="1" fill="#e3e3e3"/><rect x="11" y="9" width="1" height="1" fill="#ffffff"/><rect x="1" y="10" width="1" height="1" fill="#a0a0a0"/><rect x="2" y="10" width="1" height="1" fill="#ffffff"/><rect x="3" y="10" width="1" height="1" fill="#e3e3e3"/><rect x="4" y="10" width="1" height="1" fill="#ffffff"/><rect x="5" y="10" width="1" height="1" fill="#ffffff"/><rect x="6" y="10" width="1" height="1" fill="#ffffff"/><rect x="7" y="10" width="1" height="1" fill="#ffffff"/><rect x="8" y="10" width="1" height="1" fill="#ffffff"/><rect x="9" y="10" width="1" height="1" fill="#e3e3e3"/><rect x="10" y="10" width="1" height="1" fill="#ffffff"/><rect x="11" y="10" width="1" height="1" fill="#ffffff"/><rect x="2" y="11" width="1" height="1" fill="#ffffff"/><rect x="3" y="11" width="1" height="1" fill="#ffffff"/><rect x="4" y="11" width="1" height="1" fill="#e3e3e3"/><rect x="5" y="11" width="1" height="1" fill="#e3e3e3"/><rect x="6" y="11" width="1" height="1" fill="#e3e3e3"/><rect x="7" y="11" width="1" height="1" fill="#e3e3e3"/><rect x="8" y="11" width="1" height="1" fill="#e3e3e3"/><rect x="9" y="11" width="1" height="1" fill="#ffffff"/><rect x="10" y="11" width="1" height="1" fill="#ffffff"/><rect x="4" y="12" width="1" height="1" fill="#ffffff"/><rect x="5" y="12" width="1" height="1" fill="#ffffff"/><rect x="6" y="12" width="1" height="1" fill="#ffffff"/><rect x="7" y="12" width="1" height="1" fill="#ffffff"/><rect x="8" y="12" width="1" height="1" fill="#ffffff"/></svg>
<div class="t" style="left:668px;top:490px;font-size:15.5px;line-height:15.5px;color:#000;font-family:'Liberation Sans';transform:scaleX(0.854);transform-origin:left top;">Print to File</div>
<svg style="position:absolute;left:647px;top:511px" width="13" height="13" shape-rendering="crispEdges"><rect x="4" y="0" width="1" height="1" fill="#a0a0a0"/><rect x="5" y="0" width="1" height="1" fill="#a0a0a0"/><rect x="6" y="0" width="1" height="1" fill="#a0a0a0"/><rect x="7" y="0" width="1" height="1" fill="#a0a0a0"/><rect x="8" y="0" width="1" height="1" fill="#a0a0a0"/><rect x="2" y="1" width="1" height="1" fill="#a0a0a0"/><rect x="3" y="1" width="1" height="1" fill="#a0a0a0"/><rect x="4" y="1" width="1" height="1" fill="#696969"/><rect x="5" y="1" width="1" height="1" fill="#696969"/><rect x="6" y="1" width="1" height="1" fill="#696969"/><rect x="7" y="1" width="1" height="1" fill="#696969"/><rect x="8" y="1" width="1" height="1" fill="#696969"/><rect x="9" y="1" width="1" height="1" fill="#a0a0a0"/><rect x="10" y="1" width="1" height="1" fill="#a0a0a0"/><rect x="1" y="2" width="1" height="1" fill="#a0a0a0"/><rect x="2" y="2" width="1" height="1" fill="#a0a0a0"/><rect x="3" y="2" width="1" height="1" fill="#696969"/><rect x="4" y="2" width="1" height="1" fill="#ffffff"/><rect x="5" y="2" width="1" height="1" fill="#ffffff"/><rect x="6" y="2" width="1" height="1" fill="#ffffff"/><rect x="7" y="2" width="1" height="1" fill="#ffffff"/><rect x="8" y="2" width="1" height="1" fill="#ffffff"/><rect x="9" y="2" width="1" height="1" fill="#696969"/><rect x="10" y="2" width="1" height="1" fill="#ffffff"/><rect x="11" y="2" width="1" height="1" fill="#ffffff"/><rect x="1" y="3" width="1" height="1" fill="#a0a0a0"/><rect x="2" y="3" width="1" height="1" fill="#696969"/><rect x="3" y="3" width="1" height="1" fill="#ffffff"/><rect x="4" y="3" width="1" height="1" fill="#ffffff"/><rect x="5" y="3" width="1" height="1" fill="#ffffff"/><rect x="6" y="3" width="1" height="1" fill="#ffffff"/><rect x="7" y="3" width="1" height="1" fill="#ffffff"/><rect x="8" y="3" width="1" height="1" fill="#ffffff"/><rect x="9" y="3" width="1" height="1" fill="#ffffff"/><rect x="10" y="3" width="1" height="1" fill="#e3e3e3"/><rect x="11" y="3" width="1" height="1" fill="#ffffff"/><rect x="0" y="4" width="1" height="1" fill="#a0a0a0"/><rect x="1" y="4" width="1" height="1" fill="#696969"/><rect x="2" y="4" width="1" height="1" fill="#ffffff"/><rect x="3" y="4" width="1" height="1" fill="#ffffff"/><rect x="4" y="4" width="1" height="1" fill="#ffffff"/><rect x="5" y="4" width="1" height="1" fill="#ffffff"/><rect x="6" y="4" width="1" height="1" fill="#ffffff"/><rect x="7" y="4" width="1" height="1" fill="#ffffff"/><rect x="8" y="4" width="1" height="1" fill="#ffffff"/><rect x="9" y="4" width="1" height="1" fill="#ffffff"/><rect x="10" y="4" width="1" height="1" fill="#ffffff"/><rect x="11" y="4" width="1" height="1" fill="#e3e3e3"/><rect x="12" y="4" width="1" height="1" fill="#ffffff"/><rect x="0" y="5" width="1" height="1" fill="#a0a0a0"/><rect x="1" y="5" width="1" height="1" fill="#696969"/><rect x="2" y="5" width="1" height="1" fill="#ffffff"/><rect x="3" y="5" width="1" height="1" fill="#ffffff"/><rect x="4" y="5" width="1" height="1" fill="#ffffff"/><rect x="5" y="5" width="1" height="1" fill="#ffffff"/><rect x="6" y="5" width="1" height="1" fill="#ffffff"/><rect x="7" y="5" width="1" height="1" fill="#ffffff"/><rect x="8" y="5" width="1" height="1" fill="#ffffff"/><rect x="9" y="5" width="1" height="1" fill="#ffffff"/><rect x="10" y="5" width="1" height="1" fill="#ffffff"/><rect x="11" y="5" width="1" height="1" fill="#e3e3e3"/><rect x="12" y="5" width="1" height="1" fill="#ffffff"/><rect x="0" y="6" width="1" height="1" fill="#a0a0a0"/><rect x="1" y="6" width="1" height="1" fill="#696969"/><rect x="2" y="6" width="1" height="1" fill="#ffffff"/><rect x="3" y="6" width="1" height="1" fill="#ffffff"/><rect x="4" y="6" width="1" height="1" fill="#ffffff"/><rect x="5" y="6" width="1" height="1" fill="#ffffff"/><rect x="6" y="6" width="1" height="1" fill="#ffffff"/><rect x="7" y="6" width="1" height="1" fill="#ffffff"/><rect x="8" y="6" width="1" height="1" fill="#ffffff"/><rect x="9" y="6" width="1" height="1" fill="#ffffff"/><rect x="10" y="6" width="1" height="1" fill="#ffffff"/><rect x="11" y="6" width="1" height="1" fill="#e3e3e3"/><rect x="12" y="6" width="1" height="1" fill="#ffffff"/><rect x="0" y="7" width="1" height="1" fill="#a0a0a0"/><rect x="1" y="7" width="1" height="1" fill="#696969"/><rect x="2" y="7" width="1" height="1" fill="#ffffff"/><rect x="3" y="7" width="1" height="1" fill="#ffffff"/><rect x="4" y="7" width="1" height="1" fill="#ffffff"/><rect x="5" y="7" width="1" height="1" fill="#ffffff"/><rect x="6" y="7" width="1" height="1" fill="#ffffff"/><rect x="7" y="7" width="1" height="1" fill="#ffffff"/><rect x="8" y="7" width="1" height="1" fill="#ffffff"/><rect x="9" y="7" width="1" height="1" fill="#ffffff"/><rect x="10" y="7" width="1" height="1" fill="#ffffff"/><rect x="11" y="7" width="1" height="1" fill="#e3e3e3"/><rect x="12" y="7" width="1" height="1" fill="#ffffff"/><rect x="0" y="8" width="1" height="1" fill="#a0a0a0"/><rect x="1" y="8" width="1" height="1" fill="#696969"/><rect x="2" y="8" width="1" height="1" fill="#ffffff"/><rect x="3" y="8" width="1" height="1" fill="#ffffff"/><rect x="4" y="8" width="1" height="1" fill="#ffffff"/><rect x="5" y="8" width="1" height="1" fill="#ffffff"/><rect x="6" y="8" width="1" height="1" fill="#ffffff"/><rect x="7" y="8" width="1" height="1" fill="#ffffff"/><rect x="8" y="8" width="1" height="1" fill="#ffffff"/><rect x="9" y="8" width="1" height="1" fill="#ffffff"/><rect x="10" y="8" width="1" height="1" fill="#ffffff"/><rect x="11" y="8" width="1" height="1" fill="#e3e3e3"/><rect x="12" y="8" width="1" height="1" fill="#ffffff"/><rect x="1" y="9" width="1" height="1" fill="#a0a0a0"/><rect x="2" y="9" width="1" height="1" fill="#696969"/><rect x="3" y="9" width="1" height="1" fill="#ffffff"/><rect x="4" y="9" width="1" height="1" fill="#ffffff"/><rect x="5" y="9" width="1" height="1" fill="#ffffff"/><rect x="6" y="9" width="1" height="1" fill="#ffffff"/><rect x="7" y="9" width="1" height="1" fill="#ffffff"/><rect x="8" y="9" width="1" height="1" fill="#ffffff"/><rect x="9" y="9" width="1" height="1" fill="#ffffff"/><rect x="10" y="9" width="1" height="1" fill="#e3e3e3"/><rect x="11" y="9" width="1" height="1" fill="#ffffff"/><rect x="1" y="10" width="1" height="1" fill="#a0a0a0"/><rect x="2" y="10" width="1" height="1" fill="#ffffff"/><rect x="3" y="10" width="1" height="1" fill="#e3e3e3"/><rect x="4" y="10" width="1" height="1" fill="#ffffff"/><rect x="5" y="10" width="1" height="1" fill="#ffffff"/><rect x="6" y="10" width="1" height="1" fill="#ffffff"/><rect x="7" y="10" width="1" height="1" fill="#ffffff"/><rect x="8" y="10" width="1" height="1" fill="#ffffff"/><rect x="9" y="10" width="1" height="1" fill="#e3e3e3"/><rect x="10" y="10" width="1" height="1" fill="#ffffff"/><rect x="11" y="10" width="1" height="1" fill="#ffffff"/><rect x="2" y="11" width="1" height="1" fill="#ffffff"/><rect x="3" y="11" width="1" height="1" fill="#ffffff"/><rect x="4" y="11" width="1" height="1" fill="#e3e3e3"/><rect x="5" y="11" width="1" height="1" fill="#e3e3e3"/><rect x="6" y="11" width="1" height="1" fill="#e3e3e3"/><rect x="7" y="11" width="1" height="1" fill="#e3e3e3"/><rect x="8" y="11" width="1" height="1" fill="#e3e3e3"/><rect x="9" y="11" width="1" height="1" fill="#ffffff"/><rect x="10" y="11" width="1" height="1" fill="#ffffff"/><rect x="4" y="12" width="1" height="1" fill="#ffffff"/><rect x="5" y="12" width="1" height="1" fill="#ffffff"/><rect x="6" y="12" width="1" height="1" fill="#ffffff"/><rect x="7" y="12" width="1" height="1" fill="#ffffff"/><rect x="8" y="12" width="1" height="1" fill="#ffffff"/></svg>
<div class="t" style="left:668px;top:512px;font-size:15.5px;line-height:15.5px;color:#000;font-family:'Liberation Sans';transform:scaleX(0.854);transform-origin:left top;">Send to GArchive</div>
<svg style="position:absolute;left:647px;top:533px" width="13" height="13" shape-rendering="crispEdges"><rect x="4" y="0" width="1" height="1" fill="#a0a0a0"/><rect x="5" y="0" width="1" height="1" fill="#a0a0a0"/><rect x="6" y="0" width="1" height="1" fill="#a0a0a0"/><rect x="7" y="0" width="1" height="1" fill="#a0a0a0"/><rect x="8" y="0" width="1" height="1" fill="#a0a0a0"/><rect x="2" y="1" width="1" height="1" fill="#a0a0a0"/><rect x="3" y="1" width="1" height="1" fill="#a0a0a0"/><rect x="4" y="1" width="1" height="1" fill="#696969"/><rect x="5" y="1" width="1" height="1" fill="#696969"/><rect x="6" y="1" width="1" height="1" fill="#696969"/><rect x="7" y="1" width="1" height="1" fill="#696969"/><rect x="8" y="1" width="1" height="1" fill="#696969"/><rect x="9" y="1" width="1" height="1" fill="#a0a0a0"/><rect x="10" y="1" width="1" height="1" fill="#a0a0a0"/><rect x="1" y="2" width="1" height="1" fill="#a0a0a0"/><rect x="2" y="2" width="1" height="1" fill="#a0a0a0"/><rect x="3" y="2" width="1" height="1" fill="#696969"/><rect x="4" y="2" width="1" height="1" fill="#ffffff"/><rect x="5" y="2" width="1" height="1" fill="#ffffff"/><rect x="6" y="2" width="1" height="1" fill="#ffffff"/><rect x="7" y="2" width="1" height="1" fill="#ffffff"/><rect x="8" y="2" width="1" height="1" fill="#ffffff"/><rect x="9" y="2" width="1" height="1" fill="#696969"/><rect x="10" y="2" width="1" height="1" fill="#ffffff"/><rect x="11" y="2" width="1" height="1" fill="#ffffff"/><rect x="1" y="3" width="1" height="1" fill="#a0a0a0"/><rect x="2" y="3" width="1" height="1" fill="#696969"/><rect x="3" y="3" width="1" height="1" fill="#ffffff"/><rect x="4" y="3" width="1" height="1" fill="#ffffff"/><rect x="5" y="3" width="1" height="1" fill="#ffffff"/><rect x="6" y="3" width="1" height="1" fill="#ffffff"/><rect x="7" y="3" width="1" height="1" fill="#ffffff"/><rect x="8" y="3" width="1" height="1" fill="#ffffff"/><rect x="9" y="3" width="1" height="1" fill="#ffffff"/><rect x="10" y="3" width="1" height="1" fill="#e3e3e3"/><rect x="11" y="3" width="1" height="1" fill="#ffffff"/><rect x="0" y="4" width="1" height="1" fill="#a0a0a0"/><rect x="1" y="4" width="1" height="1" fill="#696969"/><rect x="2" y="4" width="1" height="1" fill="#ffffff"/><rect x="3" y="4" width="1" height="1" fill="#ffffff"/><rect x="4" y="4" width="1" height="1" fill="#ffffff"/><rect x="5" y="4" width="1" height="1" fill="#ffffff"/><rect x="6" y="4" width="1" height="1" fill="#ffffff"/><rect x="7" y="4" width="1" height="1" fill="#ffffff"/><rect x="8" y="4" width="1" height="1" fill="#ffffff"/><rect x="9" y="4" width="1" height="1" fill="#ffffff"/><rect x="10" y="4" width="1" height="1" fill="#ffffff"/><rect x="11" y="4" width="1" height="1" fill="#e3e3e3"/><rect x="12" y="4" width="1" height="1" fill="#ffffff"/><rect x="0" y="5" width="1" height="1" fill="#a0a0a0"/><rect x="1" y="5" width="1" height="1" fill="#696969"/><rect x="2" y="5" width="1" height="1" fill="#ffffff"/><rect x="3" y="5" width="1" height="1" fill="#ffffff"/><rect x="4" y="5" width="1" height="1" fill="#ffffff"/><rect x="5" y="5" width="1" height="1" fill="#ffffff"/><rect x="6" y="5" width="1" height="1" fill="#ffffff"/><rect x="7" y="5" width="1" height="1" fill="#ffffff"/><rect x="8" y="5" width="1" height="1" fill="#ffffff"/><rect x="9" y="5" width="1" height="1" fill="#ffffff"/><rect x="10" y="5" width="1" height="1" fill="#ffffff"/><rect x="11" y="5" width="1" height="1" fill="#e3e3e3"/><rect x="12" y="5" width="1" height="1" fill="#ffffff"/><rect x="0" y="6" width="1" height="1" fill="#a0a0a0"/><rect x="1" y="6" width="1" height="1" fill="#696969"/><rect x="2" y="6" width="1" height="1" fill="#ffffff"/><rect x="3" y="6" width="1" height="1" fill="#ffffff"/><rect x="4" y="6" width="1" height="1" fill="#ffffff"/><rect x="5" y="6" width="1" height="1" fill="#ffffff"/><rect x="6" y="6" width="1" height="1" fill="#ffffff"/><rect x="7" y="6" width="1" height="1" fill="#ffffff"/><rect x="8" y="6" width="1" height="1" fill="#ffffff"/><rect x="9" y="6" width="1" height="1" fill="#ffffff"/><rect x="10" y="6" width="1" height="1" fill="#ffffff"/><rect x="11" y="6" width="1" height="1" fill="#e3e3e3"/><rect x="12" y="6" width="1" height="1" fill="#ffffff"/><rect x="0" y="7" width="1" height="1" fill="#a0a0a0"/><rect x="1" y="7" width="1" height="1" fill="#696969"/><rect x="2" y="7" width="1" height="1" fill="#ffffff"/><rect x="3" y="7" width="1" height="1" fill="#ffffff"/><rect x="4" y="7" width="1" height="1" fill="#ffffff"/><rect x="5" y="7" width="1" height="1" fill="#ffffff"/><rect x="6" y="7" width="1" height="1" fill="#ffffff"/><rect x="7" y="7" width="1" height="1" fill="#ffffff"/><rect x="8" y="7" width="1" height="1" fill="#ffffff"/><rect x="9" y="7" width="1" height="1" fill="#ffffff"/><rect x="10" y="7" width="1" height="1" fill="#ffffff"/><rect x="11" y="7" width="1" height="1" fill="#e3e3e3"/><rect x="12" y="7" width="1" height="1" fill="#ffffff"/><rect x="0" y="8" width="1" height="1" fill="#a0a0a0"/><rect x="1" y="8" width="1" height="1" fill="#696969"/><rect x="2" y="8" width="1" height="1" fill="#ffffff"/><rect x="3" y="8" width="1" height="1" fill="#ffffff"/><rect x="4" y="8" width="1" height="1" fill="#ffffff"/><rect x="5" y="8" width="1" height="1" fill="#ffffff"/><rect x="6" y="8" width="1" height="1" fill="#ffffff"/><rect x="7" y="8" width="1" height="1" fill="#ffffff"/><rect x="8" y="8" width="1" height="1" fill="#ffffff"/><rect x="9" y="8" width="1" height="1" fill="#ffffff"/><rect x="10" y="8" width="1" height="1" fill="#ffffff"/><rect x="11" y="8" width="1" height="1" fill="#e3e3e3"/><rect x="12" y="8" width="1" height="1" fill="#ffffff"/><rect x="1" y="9" width="1" height="1" fill="#a0a0a0"/><rect x="2" y="9" width="1" height="1" fill="#696969"/><rect x="3" y="9" width="1" height="1" fill="#ffffff"/><rect x="4" y="9" width="1" height="1" fill="#ffffff"/><rect x="5" y="9" width="1" height="1" fill="#ffffff"/><rect x="6" y="9" width="1" height="1" fill="#ffffff"/><rect x="7" y="9" width="1" height="1" fill="#ffffff"/><rect x="8" y="9" width="1" height="1" fill="#ffffff"/><rect x="9" y="9" width="1" height="1" fill="#ffffff"/><rect x="10" y="9" width="1" height="1" fill="#e3e3e3"/><rect x="11" y="9" width="1" height="1" fill="#ffffff"/><rect x="1" y="10" width="1" height="1" fill="#a0a0a0"/><rect x="2" y="10" width="1" height="1" fill="#ffffff"/><rect x="3" y="10" width="1" height="1" fill="#e3e3e3"/><rect x="4" y="10" width="1" height="1" fill="#ffffff"/><rect x="5" y="10" width="1" height="1" fill="#ffffff"/><rect x="6" y="10" width="1" height="1" fill="#ffffff"/><rect x="7" y="10" width="1" height="1" fill="#ffffff"/><rect x="8" y="10" width="1" height="1" fill="#ffffff"/><rect x="9" y="10" width="1" height="1" fill="#e3e3e3"/><rect x="10" y="10" width="1" height="1" fill="#ffffff"/><rect x="11" y="10" width="1" height="1" fill="#ffffff"/><rect x="2" y="11" width="1" height="1" fill="#ffffff"/><rect x="3" y="11" width="1" height="1" fill="#ffffff"/><rect x="4" y="11" width="1" height="1" fill="#e3e3e3"/><rect x="5" y="11" width="1" height="1" fill="#e3e3e3"/><rect x="6" y="11" width="1" height="1" fill="#e3e3e3"/><rect x="7" y="11" width="1" height="1" fill="#e3e3e3"/><rect x="8" y="11" width="1" height="1" fill="#e3e3e3"/><rect x="9" y="11" width="1" height="1" fill="#ffffff"/><rect x="10" y="11" width="1" height="1" fill="#ffffff"/><rect x="4" y="12" width="1" height="1" fill="#ffffff"/><rect x="5" y="12" width="1" height="1" fill="#ffffff"/><rect x="6" y="12" width="1" height="1" fill="#ffffff"/><rect x="7" y="12" width="1" height="1" fill="#ffffff"/><rect x="8" y="12" width="1" height="1" fill="#ffffff"/></svg>
<div class="t" style="left:668px;top:534px;font-size:15.5px;line-height:15.5px;color:#000;font-family:'Liberation Sans';transform:scaleX(0.854);transform-origin:left top;">Print&amp;Send to GArchive</div>
<div style="left:603px;top:598px;width:97px;height:27px;background:#f0f0f0;border-top:1px solid #fff;border-left:1px solid #fff;border-bottom:1px solid #696969;border-right:1px solid #696969;box-sizing:border-box"></div>
<div style="left:604px;top:599px;width:95px;height:25px;border-top:1px solid #e3e3e3;border-left:1px solid #e3e3e3;border-bottom:1px solid #a0a0a0;border-right:1px solid #a0a0a0;box-sizing:border-box"></div>
<div class="t" style="left:351px;width:600px;text-align:center;top:604px;font-size:15.5px;line-height:15.5px;color:#000;font-family:'Liberation Sans';transform:scaleX(0.854);transform-origin:center top;"><u>P</u>rint</div>
<div style="left:706px;top:598px;width:97px;height:27px;background:#f0f0f0;border-top:1px solid #fff;border-left:1px solid #fff;border-bottom:1px solid #696969;border-right:1px solid #696969;box-sizing:border-box"></div>
<div style="left:707px;top:599px;width:95px;height:25px;border-top:1px solid #e3e3e3;border-left:1px solid #e3e3e3;border-bottom:1px solid #a0a0a0;border-right:1px solid #a0a0a0;box-sizing:border-box"></div>
<div class="t" style="left:454px;width:600px;text-align:center;top:604px;font-size:15.5px;line-height:15.5px;color:#000;font-family:'Liberation Sans';transform:scaleX(0.854);transform-origin:center top;">Printer <u>S</u>etup</div>
<div style="left:810px;top:598px;width:97px;height:27px;background:#f0f0f0;border-top:1px solid #fff;border-left:1px solid #fff;border-bottom:1px solid #696969;border-right:1px solid #696969;box-sizing:border-box"></div>
<div style="left:811px;top:599px;width:95px;height:25px;border-top:1px solid #e3e3e3;border-left:1px solid #e3e3e3;border-bottom:1px solid #a0a0a0;border-right:1px solid #a0a0a0;box-sizing:border-box"></div>
<div class="t" style="left:558px;width:600px;text-align:center;top:604px;font-size:15.5px;line-height:15.5px;color:#000;font-family:'Liberation Sans';transform:scaleX(0.854);transform-origin:center top;">Alt+F4=Exit</div>
<div style="left:32px;top:111px;width:895px;height:685px;overflow:hidden"><div style="left:13px;top:352px;width:537px;height:324px;box-shadow:1px 1px 14px 2px rgba(0,0,0,0.32)"></div></div>
<div style="left:45px;top:462px;width:537px;height:325px;background:#f0f0f0;border-top:2px solid #7a7a7a;box-sizing:border-box"></div>
<div style="left:45px;top:464px;width:537px;height:38px;background:#fff"></div>
<div class="t" style="left:56px;top:475px;font-size:15px;line-height:15px;color:#000;font-family:'Liberation Sans';transform:scaleX(0.97);transform-origin:left top;">MainMask List</div>
<div style="left:557px;top:473px;width:24px;height:24px;background:#c75050"></div>
<svg style="position:absolute;left:565px;top:481px" width="8" height="8" viewBox="0 0 8 8"><path d="M1 1 L7 7 M7 1 L1 7" stroke="#fff" stroke-width="1.7"/></svg>
<div style="left:61px;top:513px;width:512px;height:184px;background:#fff;border-top:1px solid #a0a0a0;border-left:1px solid #a0a0a0;border-bottom:1px solid #fff;border-right:1px solid #fff;box-sizing:border-box"></div>
<div style="left:62px;top:514px;width:510px;height:182px;border-top:1px solid #696969;border-left:1px solid #696969;border-bottom:1px solid #e3e3e3;border-right:1px solid #e3e3e3;box-sizing:border-box"></div>
<div style="left:63px;top:515px;width:99px;height:21px;background:#f0f0f0;border-top:1px solid #fff;border-left:1px solid #fff;border-bottom:1px solid #696969;border-right:1px solid #696969;box-sizing:border-box"></div>
<div style="left:64px;top:516px;width:97px;height:19px;border-top:1px solid #e3e3e3;border-left:1px solid #e3e3e3;border-bottom:1px solid #a0a0a0;border-right:1px solid #a0a0a0;box-sizing:border-box"></div>
<div style="left:162px;top:515px;width:378px;height:21px;background:#f0f0f0;border-top:1px solid #fff;border-left:1px solid #fff;border-bottom:1px solid #696969;border-right:1px solid #696969;box-sizing:border-box"></div>
<div style="left:163px;top:516px;width:376px;height:19px;border-top:1px solid #e3e3e3;border-left:1px solid #e3e3e3;border-bottom:1px solid #a0a0a0;border-right:1px solid #a0a0a0;box-sizing:border-box"></div>
<div style="left:540px;top:515px;width:11px;height:21px;background:#f0f0f0;border-top:1px solid #fff;border-left:1px solid #fff;box-sizing:border-box"></div>
<div style="left:540px;top:534px;width:11px;height:1px;background:#a0a0a0"></div>
<div style="left:540px;top:535px;width:11px;height:1px;background:#696969"></div>
<div class="t" style="left:71px;top:520px;font-size:15.5px;line-height:15.5px;color:#000;font-family:'Liberation Sans';transform:scaleX(0.854);transform-origin:left top;">Mask Id #</div>
<div class="t" style="left:170px;top:520px;font-size:15.5px;line-height:15.5px;color:#000;font-family:'Liberation Sans';transform:scaleX(0.854);transform-origin:left top;">&lt;Mask Name #&gt;</div>
<div style="left:551px;top:515px;width:20px;height:180px;background:#f0f0f0"></div>
<svg style="position:absolute;left:556px;top:522px" width="11" height="8" viewBox="0 0 11 8"><path d="M1.5 6.5 L5.5 2.5 L9.5 6.5" fill="none" stroke="#606060" stroke-width="1.8"/></svg>
<svg style="position:absolute;left:556px;top:681px" width="11" height="8" viewBox="0 0 11 8"><path d="M1.5 1.5 L5.5 5.5 L9.5 1.5" fill="none" stroke="#606060" stroke-width="1.8"/></svg>
<div style="left:552px;top:589px;width:19px;height:34px;background:#cdcdcd"></div>
<div style="left:161px;top:536px;width:1px;height:159px;background:#f0f0f0"></div>
<div style="left:539px;top:536px;width:1px;height:159px;background:#f0f0f0"></div>
<div class="t" style="left:64px;top:539px;font-size:15.5px;line-height:15.5px;color:#000;font-family:'Liberation Sans';transform:scaleX(0.854);transform-origin:left top;">NZI04</div>
<div class="t" style="left:164px;top:539px;font-size:15.5px;line-height:15.5px;color:#000;font-family:'Liberation Sans';transform:scaleX(0.854);transform-origin:left top;">MARINE INSURANCE CERTIFICATE - DRAFT</div>
<div class="t" style="left:64px;top:559px;font-size:15.5px;line-height:15.5px;color:#000;font-family:'Liberation Sans';transform:scaleX(0.854);transform-origin:left top;">AMAR02</div>
<div class="t" style="left:164px;top:559px;font-size:15.5px;line-height:15.5px;color:#000;font-family:'Liberation Sans';transform:scaleX(0.854);transform-origin:left top;">MARINE INSURANCE CERTIFICATE - DUPLICATE</div>
<div class="t" style="left:64px;top:579px;font-size:15.5px;line-height:15.5px;color:#000;font-family:'Liberation Sans';transform:scaleX(0.854);transform-origin:left top;">NZI02</div>
<div class="t" style="left:164px;top:579px;font-size:15.5px;line-height:15.5px;color:#000;font-family:'Liberation Sans';transform:scaleX(0.854);transform-origin:left top;">MARINE INSURANCE CERTIFICATE - DUPLICATE</div>
<div class="t" style="left:64px;top:599px;font-size:15.5px;line-height:15.5px;color:#000;font-family:'Liberation Sans';transform:scaleX(0.854);transform-origin:left top;">AMAR04</div>
<div class="t" style="left:164px;top:599px;font-size:15.5px;line-height:15.5px;color:#000;font-family:'Liberation Sans';transform:scaleX(0.854);transform-origin:left top;">MARINE INSURANCE CERTIFICATE - ORIGINAL</div>
<div class="t" style="left:64px;top:618px;font-size:15.5px;line-height:15.5px;color:#000;font-family:'Liberation Sans';transform:scaleX(0.854);transform-origin:left top;">NZI03</div>
<div class="t" style="left:164px;top:618px;font-size:15.5px;line-height:15.5px;color:#000;font-family:'Liberation Sans';transform:scaleX(0.854);transform-origin:left top;">MARINE INSURANCE CERTIFICATE - ORIGINAL</div>
<div class="t" style="left:64px;top:638px;font-size:15.5px;line-height:15.5px;color:#000;font-family:'Liberation Sans';transform:scaleX(0.854);transform-origin:left top;">ALT01</div>
<div class="t" style="left:164px;top:638px;font-size:15.5px;line-height:15.5px;color:#000;font-family:'Liberation Sans';transform:scaleX(0.854);transform-origin:left top;">MASTER DOCUMENT</div>
<div style="left:63px;top:656px;width:98px;height:18px;background:#00ffff"></div>
<div style="left:162px;top:656px;width:377px;height:18px;background:#00ffff;border:1px dotted #ff0000;box-sizing:border-box"></div>
<div class="t" style="left:64px;top:658px;font-size:15.5px;line-height:15.5px;color:#000;font-family:'Liberation Sans';transform:scaleX(0.854);transform-origin:left top;">MAS01</div>
<div class="t" style="left:164px;top:658px;font-size:15.5px;line-height:15.5px;color:#000;font-family:'Liberation Sans';transform:scaleX(0.854);transform-origin:left top;">MASTER DOCUMENT</div>
<div class="t" style="left:64px;top:677px;font-size:15.5px;line-height:15.5px;color:#000;font-family:'Liberation Sans';transform:scaleX(0.854);transform-origin:left top;">MASCCN</div>
<div class="t" style="left:164px;top:677px;font-size:15.5px;line-height:15.5px;color:#000;font-family:'Liberation Sans';transform:scaleX(0.854);transform-origin:left top;">MASTER DOCUMENT</div>
<div class="t" style="left:62px;top:708px;font-size:15.5px;line-height:15.5px;color:#000;font-family:'Liberation Sans';transform:scaleX(0.854);transform-origin:left top;">Comment:</div>
<div style="left:62px;top:726px;width:518px;height:25px;background:#f0f0f0;border-top:1px solid #a0a0a0;border-left:1px solid #a0a0a0;border-bottom:1px solid #fff;border-right:1px solid #fff;box-sizing:border-box"></div>
<div style="left:63px;top:727px;width:516px;height:23px;border-top:1px solid #696969;border-left:1px solid #696969;border-bottom:1px solid #e3e3e3;border-right:1px solid #e3e3e3;box-sizing:border-box"></div>
<div class="t" style="left:66px;top:731px;font-size:15.5px;line-height:15.5px;color:#000;font-family:'Liberation Sans';transform:scaleX(0.854);transform-origin:left top;">The Base Document from which all documents are created</div>
<div style="left:45px;top:760px;width:537px;height:27px;overflow:hidden">
<div style="left:233px;top:4px;width:93px;height:30px;background:#f0f0f0;border-top:1px solid #fff;border-left:1px solid #fff;border-right:1px solid #696969;box-sizing:border-box"><div style="left:0;top:0;right:0;bottom:0;border-top:1px solid #e3e3e3;border-left:1px solid #e3e3e3;border-right:1px solid #a0a0a0;"></div></div>
<div style="left:341px;top:4px;width:93px;height:30px;background:#f0f0f0;border-top:1px solid #fff;border-left:1px solid #fff;border-right:1px solid #696969;box-sizing:border-box"><div style="left:0;top:0;right:0;bottom:0;border-top:1px solid #e3e3e3;border-left:1px solid #e3e3e3;border-right:1px solid #a0a0a0;"></div></div>
<div style="left:444px;top:4px;width:93px;height:30px;background:#f0f0f0;border-top:1px solid #fff;border-left:1px solid #fff;border-right:1px solid #696969;box-sizing:border-box"><div style="left:0;top:0;right:0;bottom:0;border-top:1px solid #e3e3e3;border-left:1px solid #e3e3e3;border-right:1px solid #a0a0a0;"></div></div>
</div>
<div class="t" style="left:24px;width:600px;text-align:center;top:771px;font-size:15.5px;line-height:15.5px;color:#000;font-family:'Liberation Sans';transform:scaleX(0.854);transform-origin:center top;"><u>O</u>k</div>
<div class="t" style="left:132px;width:600px;text-align:center;top:771px;font-size:15.5px;line-height:15.5px;color:#000;font-family:'Liberation Sans';transform:scaleX(0.854);transform-origin:center top;"><u>C</u>ancel</div>
<div class="t" style="left:235px;width:600px;text-align:center;top:769px;font-size:15.5px;line-height:15.5px;color:#000;font-family:'Liberation Sans';transform:scaleX(0.854);transform-origin:center top;"><u>S</u>earch...</div>
</body></html>
